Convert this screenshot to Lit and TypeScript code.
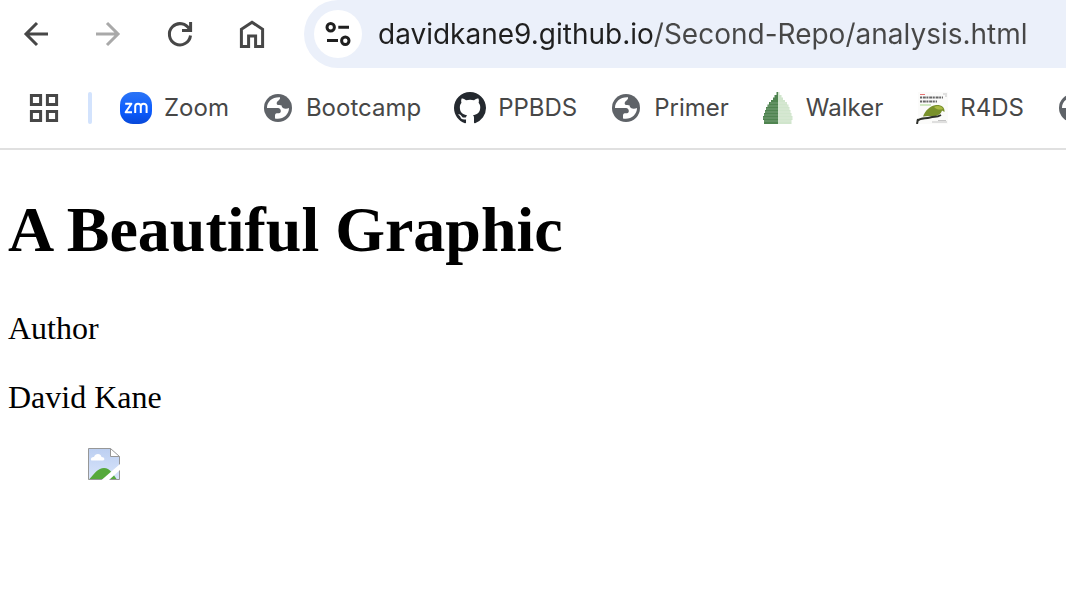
import { LitElement, html, svg, css } from "lit";
import { customElement } from "lit/decorators.js";

const globe = svg`
  <circle cx="16" cy="16" r="14" fill="#5f6368"/>
  <path fill="#fff" d="M5 16C4.800 9.500 10.500 4.800 18 5.200C18.600 8 15.400 8.400 14.800 10.600C14.200 13.400 16.500 13.200 19.400 13.200C19.800 16.800 24 17.400 27 16C27 23 20.500 28 13 26.500V23.500C13 21 15 21.200 17 21.200C19.600 21.200 19.600 16.400 16 16Z"/>`;

const bookmarks = [
  {
    label: "Zoom",
    icon: svg`
      <defs><linearGradient id="z" x1="0" y1="0" x2="0" y2="1"><stop offset="0" stop-color="#2b74f5"/><stop offset="0.600" stop-color="#0b5cff"/><stop offset="1" stop-color="#0848d8"/></linearGradient></defs>
      <rect width="32" height="32" rx="13" fill="url(#z)"/>
      <path d="M5.200 11.800H11.400L5.600 20.200H12M15.200 21V14.600A2.800 2.800 0 0 1 20.800 14.600V21M20.800 14.600A2.800 2.800 0 0 1 26.600 14.600V21" fill="none" stroke="#fff" stroke-width="2" stroke-linejoin="round"/>`,
  },
  { label: "Bootcamp", icon: globe },
  {
    label: "PPBDS",
    icon: svg`<path transform="scale(2)" fill="#24292f" d="M8 0C3.580 0 0 3.580 0 8c0 3.540 2.290 6.530 5.470 7.590.4.070.55-.17.55-.38 0-.19-.01-.82-.01-1.490-2.010.37-2.530-.49-2.690-.94-.09-.23-.48-.94-.82-1.130-.28-.15-.68-.52-.01-.53.63-.01 1.080.58 1.230.82.72 1.210 1.870.87 2.330.66.07-.52.28-.87.51-1.070-1.780-.2-3.640-.89-3.640-3.950 0-.87.31-1.590.82-2.150-.08-.2-.36-1.020.08-2.120 0 0 .67-.21 2.200.82.64-.18 1.320-.27 2-.27s1.360.09 2 .27c1.530-1.040 2.200-.82 2.200-.82.44 1.100.16 1.920.08 2.120.51.56.82 1.270.82 2.150 0 3.070-1.870 3.750-3.650 3.950.29.25.54.73.54 1.480 0 1.070-.01 1.930-.01 2.200 0 .21.15.46.55.38A8.010 8.010 0 0 0 16 8c0-4.420-3.580-8-8-8z"/>`,
  },
  { label: "Primer", icon: globe },
  {
    label: "Walker",
    icon: svg`
      <path fill="#4f8450" d="M16 0H14.500V3H12.500V5.500H11V8H9V10H7V12.500H5.500V15H4V18H3V21H2V24H1V28H2V32H16Z"/>
      <path fill="#d0e5cc" d="M16 0H17.500V3H19.500V5.500H21V8H23V10H25V12.500H26.500V15H27.500V18H28.500V21H29.500V24H30.500V28H29.500V32H16Z"/>
      <path stroke="#fff" stroke-opacity="0.280" stroke-width="0.800" d="M8 11H25M6 14H27M4 17H28M3 20H29M2 23H30M1 26H31M1 29H31"/>`,
  },
  {
    label: "R4DS",
    icon: svg`
      <rect x="2" width="30" height="32" fill="#fbfbfa"/>
      <path stroke="#e57373" d="M4 2.500H9"/>
      <path stroke="#666" stroke-width="1.800" stroke-dasharray="2 .8 3 .6" d="M4 5.500H27M4 9.500H21"/>
      <path stroke="#a5d68b" d="M4 13H15"/>
      <path stroke="#c4c4c4" d="M27 2H31M29 4H31"/>
      <path fill="#79912b" d="M7 24.500C9 19 14 13.500 20 13C25 12.500 29 15 28.500 20L26 18.500C25 23 19 25.500 13 24Z"/>
      <path fill="#a9b943" d="M18 15C22 13 26 14.500 27 17C24 18 21 18 18 15Z"/>
      <path fill="none" stroke="#2e302b" stroke-width="2" d="M1 29C5 25 9 27 14 25.500S20 26 25 23M2 27L1 32"/>
      <path stroke="#c4c4c4" d="M16 30H31M22 28.500H30"/>`,
  },
  { label: "", icon: globe },
];

@customElement("app-root")
export class AppRoot extends LitElement {
  static styles = css`
    :host {
      display: block;
      min-height: 100vh;
      overflow: hidden;
      background: #fff;
      color: #000;
      font-family: "Liberation Serif", serif;
      font-size: 32px;
    }
    svg { display: block; flex: none; }
    .chrome {
      border-bottom: 2px solid #e0e0e0;
      font-family: Inter, "Liberation Sans", sans-serif;
    }
    .toolbar { display: flex; height: 68px; }
    .tool {
      display: grid;
      place-items: center;
      flex: none;
      width: 72px;
      padding: 0;
      border: 0;
      background: none;
      color: #474747;
    }
    .tool:disabled { color: #a9a9a9; }
    .line { fill: none; stroke: currentColor; stroke-width: 3px; }
    .address {
      display: flex;
      flex: 1;
      align-items: center;
      gap: 16px;
      min-width: 0;
      margin-left: 16px;
      padding-left: 10px;
      border-radius: 34px 0 0 34px;
      background: #ebf0fa;
    }
    .site {
      display: grid;
      place-items: center;
      flex: none;
      width: 48px;
      height: 48px;
      padding: 0;
      border: 0;
      border-radius: 50%;
      background: #fff;
      color: #1f1f1f;
    }
    .url {
      flex: 1;
      min-width: 0;
      padding: 0;
      border: 0;
      outline: 0;
      font: 28px/36px Inter, "Liberation Sans", sans-serif;
      color: transparent;
      caret-color: #1f1f1f;
      background: linear-gradient(to right, #1f1f1f 276px, #474747 276px);
      -webkit-background-clip: text;
      background-clip: text;
    }
    .bookmarks {
      display: flex;
      align-items: center;
      height: 80px;
      padding-left: 28px;
      overflow: hidden;
    }
    .apps { padding: 0; border: 0; background: none; color: #474747; }
    .divider { flex: none; width: 4px; height: 32px; margin: 0 28px; border-radius: 2px; background: #d3e3fd; }
    .links { display: flex; gap: 33px; }
    .link {
      display: flex;
      align-items: center;
      gap: 12px;
      font-size: 24px;
      line-height: 32px;
      color: #474747;
      text-decoration: none;
      white-space: nowrap;
    }
    .page { padding: 0 8px; }
    .title { margin: 43px 0; font-size: 64px; line-height: 74px; }
    .line-text { margin: 0 0 32px; line-height: 37px; }
    .figure { margin: 0 80px; }
  `;

  render() {
    return html`
      <header class="chrome">
        <nav class="toolbar" aria-label="Navigation">
          <button class="tool" aria-label="Back">
            <svg class="line" width="32" height="32"><path d="M28 16H6M17 5L6 16L17 27"/></svg>
          </button>
          <button class="tool" aria-label="Forward" disabled>
            <svg class="line" width="32" height="32"><path d="M4 16H26M15 5L26 16L15 27"/></svg>
          </button>
          <button class="tool" aria-label="Reload">
            <svg class="line" width="32" height="32"><path d="M25.500 11.600A10.600 10.600 0 1 0 26.500 17.500M26.600 4V12.600H18"/></svg>
          </button>
          <button class="tool" aria-label="Home">
            <svg class="line" width="32" height="32"><path d="M5.400 28.600V11.200L16 4.200L26.600 11.200V28.600H19.600V18.100H12.600V28.600Z"/></svg>
          </button>
          <div class="address">
            <button class="site" aria-label="View site information">
              <svg class="line" width="32" height="32"><circle cx="8.700" cy="9.300" r="3.700"/><circle cx="23.300" cy="22.700" r="3.700"/><path d="M16.300 9.200H27M5 22.600H16"/></svg>
            </button>
            <input class="url" aria-label="Address" spellcheck="false" value="davidkane9.github.io/Second-Repo/analysis.html">
          </div>
        </nav>
        <nav class="bookmarks" aria-label="Bookmarks">
          <button class="apps" aria-label="Tab groups">
            <svg class="line" width="32" height="32"><path d="M3.400 3.400H12.600V12.600H3.400ZM19.400 3.400H28.600V12.600H19.400ZM3.400 19.400H12.600V28.600H3.400ZM19.400 19.400H28.600V28.600H19.400Z"/></svg>
          </button>
          <span class="divider"></span>
          <div class="links">
            ${bookmarks.map(
              (b) => html`<a class="link" href="#" aria-label=${b.label || "Bookmark"}><svg width="32" height="32" fill="none">${b.icon}</svg>${b.label}</a>`
            )}
          </div>
        </nav>
      </header>
      <main class="page">
        <h1 class="title">A Beautiful Graphic</h1>
        <p class="line-text">Author</p>
        <p class="line-text">David Kane</p>
        <figure class="figure">
          <svg width="32" height="32" role="img" aria-label="Missing picture">
            <defs><linearGradient id="sky" x1="0" y1="0" x2="0" y2="1"><stop offset="0" stop-color="#bccff1"/><stop offset="1" stop-color="#d9e5fb"/></linearGradient></defs>
            <path d="M.5 .5H22.500L31.500 9V31.500H.5Z" fill="url(#sky)"/>
            <path d="M4 12.500C2 12.500 3 8.500 6 9C7 5 13 5 13.500 9C17 9 17 12.500 15 12.500Z" fill="#fff"/>
            <path d="M1 31.500C7 25 10 20 16 20S25 26 29 31.500Z" fill="#56a93c"/>
            <path d="M22.500 .5V8.500H31.500Z" fill="#fff"/>
            <path d="M.5 .5H22.500L31.500 8.500V31.500H.5ZM22.500 .5V8.500H31.500" fill="none" stroke="#979797"/>
            <path d="M32 16V22L21 32H13.500Z" fill="#fff"/>
          </svg>
        </figure>
      </main>
    `;
  }
}
